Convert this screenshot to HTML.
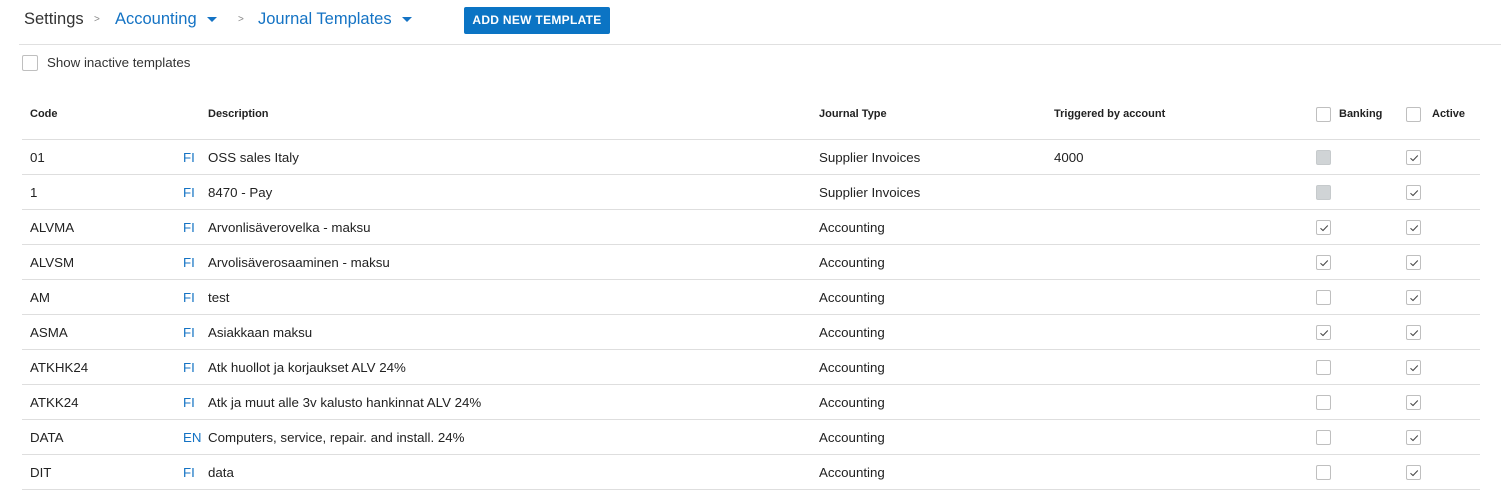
<!DOCTYPE html><html><head><meta charset="utf-8"><style>
body{margin:0;width:1501px;height:491px;background:#fff;font-family:"Liberation Sans",sans-serif;color:#222;position:relative;overflow:hidden}
.a{position:absolute;white-space:nowrap}
.bc{top:10px;font-size:16.5px}
.hl{position:absolute;left:22px;width:1458px;height:1px;background:#dedede}
.th{font-size:11px;font-weight:bold;top:108px;color:#222}
.td{font-size:13.3px;color:#222}
.blue{color:#1473c4 !important}
.cb{position:absolute;width:13px;height:13px;border:1px solid #bfbfbf;border-radius:2px;background:#fff;box-sizing:content-box}
.cb.g{background:#d0d4d6;border-color:#c6cacc}
.cb svg{position:absolute;left:2px;top:2px}
.tri{display:inline-block;width:0;height:0;border-left:5px solid transparent;border-right:5px solid transparent;border-top:5px solid #1473c4;vertical-align:middle;margin-left:10px}
</style></head><body>
<div class="a bc" style="left:24px;color:#333">Settings</div>
<div class="a" style="left:94px;top:14px;font-size:10px;color:#888">&gt;</div>
<div class="a bc blue" style="left:115px">Accounting<span class="tri"></span></div>
<div class="a" style="left:238px;top:14px;font-size:10px;color:#888">&gt;</div>
<div class="a bc blue" style="left:258px">Journal Templates<span class="tri"></span></div>
<div class="a" style="left:464px;top:7px;width:146px;height:27px;background:#0b74c4;border-radius:2px;color:#fff;font-size:12px;font-weight:bold;line-height:27px;text-align:center;letter-spacing:.3px">ADD NEW TEMPLATE</div>
<div class="a" style="left:19px;top:44px;width:1482px;height:1px;background:#e0e0e0"></div>
<div class="cb" style="left:22px;top:55px;width:14px;height:14px"></div>
<div class="a" style="left:47px;top:55px;font-size:13.3px;color:#333">Show inactive templates</div>
<div class="a th" style="left:30px">Code</div>
<div class="a th" style="left:208px">Description</div>
<div class="a th" style="left:819px">Journal Type</div>
<div class="a th" style="left:1054px">Triggered by account</div>
<div class="cb" style="left:1316px;top:107px"></div>
<div class="a th" style="left:1339px">Banking</div>
<div class="cb" style="left:1406px;top:107px"></div>
<div class="a th" style="left:1432px">Active</div>
<div id="rows"></div>
<script>
var d=[["01","FI","OSS sales Italy","Supplier Invoices","4000","g",1],["1","FI","8470 - Pay","Supplier Invoices","","g",1],["ALVMA","FI","Arvonlisäverovelka - maksu","Accounting","",1,1],["ALVSM","FI","Arvolisäverosaaminen - maksu","Accounting","",1,1],["AM","FI","test","Accounting","",0,1],["ASMA","FI","Asiakkaan maksu","Accounting","",1,1],["ATKHK24","FI","Atk huollot ja korjaukset ALV 24%","Accounting","",0,1],["ATKK24","FI","Atk ja muut alle 3v kalusto hankinnat ALV 24%","Accounting","",0,1],["DATA","EN","Computers, service, repair. and install. 24%","Accounting","",0,1],["DIT","FI","data","Accounting","",0,1]];
var ck='<svg width="10" height="10" viewBox="0 0 10 10"><path d="M1.5 5.2L4 7.5L8.8 2.5" fill="none" stroke="#444" stroke-width="1"/></svg>';
var h='<div class="hl" style="top:139px"></div>';
d.forEach(function(r,i){var y=139+i*35;var t=y+11;
h+='<div class="a td" style="left:30px;top:'+t+'px">'+r[0]+'</div>';
h+='<div class="a td blue" style="left:183px;top:'+t+'px">'+r[1]+'</div>';
h+='<div class="a td" style="left:208px;top:'+t+'px">'+r[2]+'</div>';
h+='<div class="a td" style="left:819px;top:'+t+'px">'+r[3]+'</div>';
h+='<div class="a td" style="left:1054px;top:'+t+'px">'+r[4]+'</div>';
h+='<div class="cb'+(r[5]=="g"?" g":"")+'" style="left:1316px;top:'+(y+11)+'px">'+(r[5]===1?ck:'')+'</div>';
h+='<div class="cb" style="left:1406px;top:'+(y+11)+'px">'+ck+'</div>';
h+='<div class="hl" style="top:'+(y+35)+'px"></div>';});
document.getElementById('rows').innerHTML=h;
</script>
</body></html>
